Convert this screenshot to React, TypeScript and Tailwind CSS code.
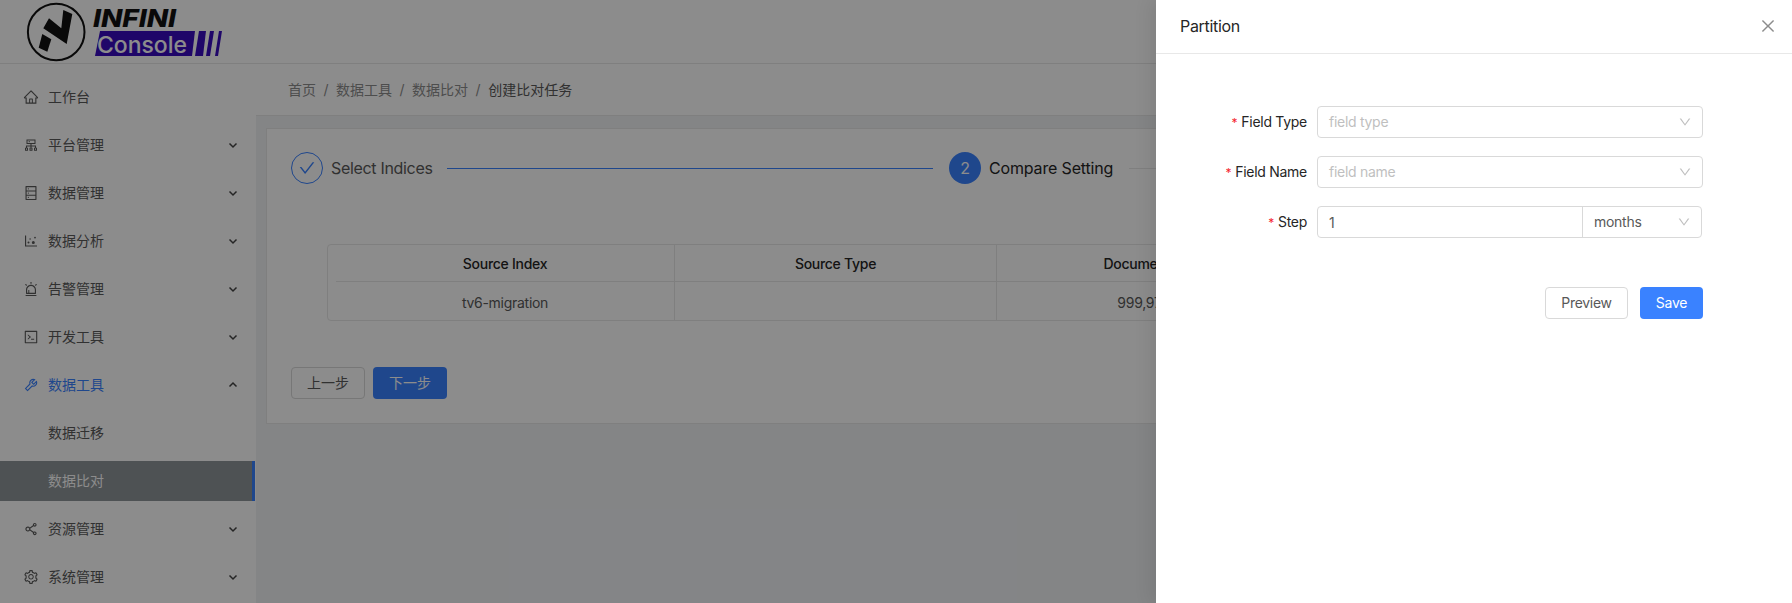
import {
  AiOutlineAlert,
  AiOutlineCheck,
  AiOutlineClose,
  AiOutlineCluster,
  AiOutlineCode,
  AiOutlineDatabase,
  AiOutlineDotChart,
  AiOutlineDown,
  AiOutlineHome,
  AiOutlineSetting,
  AiOutlineShareAlt,
  AiOutlineTool,
} from "react-icons/ai";
import { FC, ReactNode } from "react";

const Arrow: FC<{ up?: boolean }> = ({ up }) => (
  <svg width="10" height="10" viewBox="0 0 10 10" fill="none" stroke="currentColor" strokeWidth="1.5" className="text-[#444]">
    <polyline points={up ? "1.5,6.5 5,3 8.5,6.5" : "1.5,3.5 5,7 8.5,3.5"} />
  </svg>
);

const MenuItem: FC<{ icon?: ReactNode; label: string; arrow?: "up" | "down"; active?: boolean; selected?: boolean }> = ({
  icon,
  label,
  arrow,
  active,
  selected,
}) => (
  <div
    className={
      selected
        ? "h-10 mb-2 flex items-center pl-12 bg-[#8e9599] border-r-[3px] border-[#3a82ff] mr-px text-white"
        : `h-10 mb-2 flex items-center ${active ? "text-[#3a82ff]" : "text-[#595959]"}`
    }
  >
    {icon && <span className="w-12 pl-[23px] flex items-center text-[16px]">{icon}</span>}
    {!icon && !selected && <span className="w-12" />}
    <span className="flex-1">{label}</span>
    {arrow && (
      <span className="mr-[18px] flex">
        <Arrow up={arrow === "up"} />
      </span>
    )}
  </div>
);

const Logo: FC = () => (
  <div className="h-[63px] border-b border-[#e8e8e8] box-content">
    <svg width="240" height="63" viewBox="0 0 240 63">
      <circle cx="56.2" cy="32" r="28.3" fill="none" stroke="#111" strokeWidth="2" />
      <polygon points="49,18.3 61.3,28.3 63.3,10 72.3,14 66.7,44 43.3,28.3" fill="#111" />
      <polygon points="42.3,34 51.3,39.3 47.3,51.7 38.7,47.7" fill="#111" />
      <text x="93" y="27" textLength="83" lengthAdjust="spacingAndGlyphs" fontFamily="Inter" fontSize="25" fontWeight="800" fontStyle="italic" fill="#111">
        INFINI
      </text>
      <polygon points="100,31 195,31 192,56 95,56" fill="#3a0cc0" />
      <polygon points="199,31 206,31 203,56 195,56" fill="#3a0cc0" />
      <polygon points="210,31 214,31 210,56 206,56" fill="#3a0cc0" />
      <polygon points="219,31 222,31 218,56 215,56" fill="#3a0cc0" />
      <text x="97" y="53" textLength="90" lengthAdjust="spacingAndGlyphs" fontFamily="Inter" fontSize="23" fontWeight="500" fill="#fff">
        Console
      </text>
    </svg>
  </div>
);

const Sidebar: FC = () => (
  <aside className="w-[256px] shrink-0 bg-white">
    <Logo />
    <nav className="pt-[13px]">
      <MenuItem icon={<AiOutlineHome />} label="工作台" />
      <MenuItem icon={<AiOutlineCluster />} label="平台管理" arrow="down" />
      <MenuItem icon={<AiOutlineDatabase />} label="数据管理" arrow="down" />
      <MenuItem icon={<AiOutlineDotChart />} label="数据分析" arrow="down" />
      <MenuItem icon={<AiOutlineAlert />} label="告警管理" arrow="down" />
      <MenuItem icon={<AiOutlineCode />} label="开发工具" arrow="down" />
      <MenuItem icon={<AiOutlineTool />} label="数据工具" arrow="up" active />
      <MenuItem label="数据迁移" />
      <MenuItem label="数据比对" selected />
      <MenuItem icon={<AiOutlineShareAlt />} label="资源管理" arrow="down" />
      <MenuItem icon={<AiOutlineSetting />} label="系统管理" arrow="down" />
    </nav>
  </aside>
);

const Breadcrumb: FC = () => (
  <div className="h-[52px] bg-white border-b border-[#e8e8e8] flex items-center pl-8 gap-[7.5px] text-[#8c8c8c]">
    <span>首页</span>
    <span>/</span>
    <span>数据工具</span>
    <span>/</span>
    <span>数据比对</span>
    <span>/</span>
    <span className="text-[#595959]">创建比对任务</span>
  </div>
);

const Steps: FC = () => (
  <div className="flex items-center h-8 ml-6 text-base tracking-[-0.02em]">
    <span className="w-8 h-8 rounded-full border border-[#3a82ff] text-[#3a82ff] flex items-center justify-center text-[18px]">
      <AiOutlineCheck />
    </span>
    <span className="ml-2 w-[100px] text-[#595959] whitespace-nowrap">Select Indices</span>
    <span className="mx-4 h-px w-[486px] bg-[#3a82ff]" />
    <span className="w-8 h-8 rounded-full bg-[#3a82ff] text-white flex items-center justify-center">2</span>
    <span className="ml-2 w-[124px] text-[#262626] whitespace-nowrap tracking-[-0.01em]">Compare Setting</span>
    <span className="mx-4 h-px w-[486px] bg-[#e8e8e8]" />
  </div>
);

const CompareTable: FC = () => (
  <div className="ml-[60px] mt-[60px] mr-6 border border-[#e8e8e8] rounded-[4px] grid grid-cols-[8px_339px_322px_323px_1fr] tracking-[-0.02em]">
    <div />
    <div className="h-[37px] pt-[2px] flex items-center justify-center font-medium text-[#262626] border-r border-[#e8e8e8] border-b">Source Index</div>
    <div className="h-[37px] pt-[2px] flex items-center justify-center font-medium text-[#262626] border-r border-[#e8e8e8] border-b">Source Type</div>
    <div className="h-[37px] pt-[2px] flex items-center justify-center font-medium text-[#262626] border-r border-[#e8e8e8] border-b">Document Count</div>
    <div className="h-[37px] border-b border-[#e8e8e8]" />
    <div />
    <div className="h-[38px] pt-[3px] flex items-center justify-center text-[#595959] border-r border-[#e8e8e8]">tv6-migration</div>
    <div className="h-[38px] border-r border-[#e8e8e8]" />
    <div className="h-[38px] pt-[3px] flex items-center justify-center text-[#595959] border-r border-[#e8e8e8]">999,970,000</div>
    <div className="h-[38px]" />
  </div>
);

const Content: FC = () => (
  <main className="flex-1 min-w-0 bg-[#f0f2f5]">
    <div className="h-[63px] bg-white border-b border-[#e8e8e8] box-content" />
    <Breadcrumb />
    <div className="mt-3 ml-[10px] h-[296px] bg-white border border-[#e8e8e8] pt-[23px]">
      <Steps />
      <CompareTable />
      <div className="mt-[46px] ml-6 flex gap-2">
        <button className="w-[74px] h-8 rounded-[4px] border border-[#d9d9d9] text-[#595959]">上一步</button>
        <button className="w-[74px] h-8 rounded-[4px] bg-[#3a82ff] text-white">下一步</button>
      </div>
    </div>
  </main>
);

const FormRow: FC<{ label: string; children: ReactNode }> = ({ label, children }) => (
  <div className="flex items-center h-8 mb-[18px]">
    <label className="w-[151px] text-right text-[#262626] shrink-0 tracking-[-0.02em]">
      <span className="text-[#f5222d] mr-1 text-xs">*</span>
      {label}
    </label>
    <div className="ml-[10px] w-[386px] flex">{children}</div>
  </div>
);

const SelectBox: FC<{ text: string; placeholder?: boolean }> = ({ text, placeholder }) => (
  <div className="flex-1 h-8 border border-[#d9d9d9] rounded-[4px] flex items-center justify-between pl-[11px] pr-[10px]">
    <span className={`tracking-[-0.02em] ${placeholder ? "text-[#bfbfbf]" : "text-[#595959]"}`}>{text}</span>
    <AiOutlineDown className="text-[14px] text-[#bfbfbf]" />
  </div>
);

const Drawer: FC = () => (
  <div className="absolute right-0 top-0 bottom-0 w-[636px] bg-white shadow-[-6px_0_16px_rgba(0,0,0,0.08)]">
    <div className="h-[54px] pb-[2px] border-b border-[#e8e8e8] flex items-center justify-between pl-6 pr-[15px]">
      <span className="text-base text-[#262626] tracking-[-0.02em]">Partition</span>
      <AiOutlineClose className="text-[18px] text-[#8c8c8c]" />
    </div>
    <div className="pt-[52px]">
      <FormRow label="Field Type">
        <SelectBox text="field type" placeholder />
      </FormRow>
      <FormRow label="Field Name">
        <SelectBox text="field name" placeholder />
      </FormRow>
      <FormRow label="Step">
        <div className="flex w-[385px] h-8 border border-[#d9d9d9] rounded-[4px]">
          <span className="w-[265px] border-r border-[#d9d9d9] pl-[11px] pt-px leading-[30px] text-[#595959]">1</span>
          <span className="flex-1 flex items-center justify-between pl-[11px] pr-[10px] text-[#595959] tracking-[-0.02em]">
            months
            <AiOutlineDown className="text-[14px] text-[#bfbfbf]" />
          </span>
        </div>
      </FormRow>
    </div>
    <div className="mt-[49px] ml-[389px] flex gap-3 tracking-[-0.02em]">
      <button className="w-[83px] h-8 rounded-[4px] border border-[#d9d9d9] text-[#595959]">Preview</button>
      <button className="w-[63px] h-8 rounded-[4px] bg-[#3a82ff] text-white">Save</button>
    </div>
  </div>
);

export default function App() {
  return (
    <div className="relative w-[1792px] h-[603px] overflow-hidden flex text-sm font-['Inter','Noto_Sans_CJK_SC',sans-serif]">
      <Sidebar />
      <Content />
      <div className="absolute inset-0 bg-black/45" />
      <Drawer />
    </div>
  );
}
